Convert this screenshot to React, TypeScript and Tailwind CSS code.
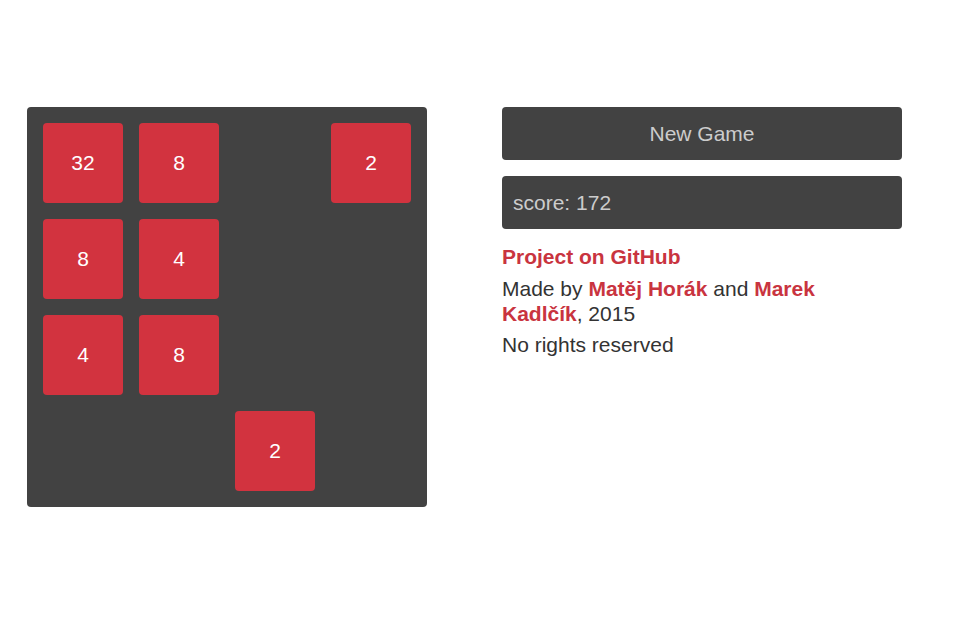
import React from "react";

const grid: (number | null)[][] = [
  [32, 8, null, 2],
  [8, 4, null, null],
  [4, 8, null, null],
  [null, null, 2, null],
];

export default function App() {
  return (
    <div className="min-h-[639px] w-full bg-white" style={{ fontFamily: '"Liberation Sans", Arial, sans-serif' }}>
      <div className="flex items-start gap-[75px] pl-[27px] pt-[107px]">
        <div className="grid w-[400px] grid-cols-4 gap-4 rounded bg-[#424242] p-4">
          {grid.flat().map((v, i) =>
            v === null ? (
              <div key={i} className="h-20 w-20" />
            ) : (
              <div
                key={i}
                className="flex h-20 w-20 items-center justify-center rounded bg-[#d2333f] text-[21px] text-white"
              >
                {v}
              </div>
            )
          )}
        </div>
        <div className="w-[400px]">
          <button className="flex h-[53px] w-full items-center justify-center rounded bg-[#424242] text-[21px] text-[#cccccc]">
            New Game
          </button>
          <div className="mt-4 flex h-[53px] w-full items-center rounded bg-[#424242] px-[11px] text-[21px] text-[#cccccc]">
            score: 172
          </div>
          <div className="mt-[15px] w-[380px] text-[21px] leading-[25px] text-[#333333]">
            <p className="font-bold text-[#c9343f]">Project on GitHub</p>
            <p className="mt-[7px]">
              Made by <span className="font-bold text-[#c9343f]">Matěj Horák</span> and{" "}
              <span className="font-bold text-[#c9343f]">Marek Kadlčík</span>, 2015
            </p>
            <p className="mt-[6px]">No rights reserved</p>
          </div>
        </div>
      </div>
    </div>
  );
}
